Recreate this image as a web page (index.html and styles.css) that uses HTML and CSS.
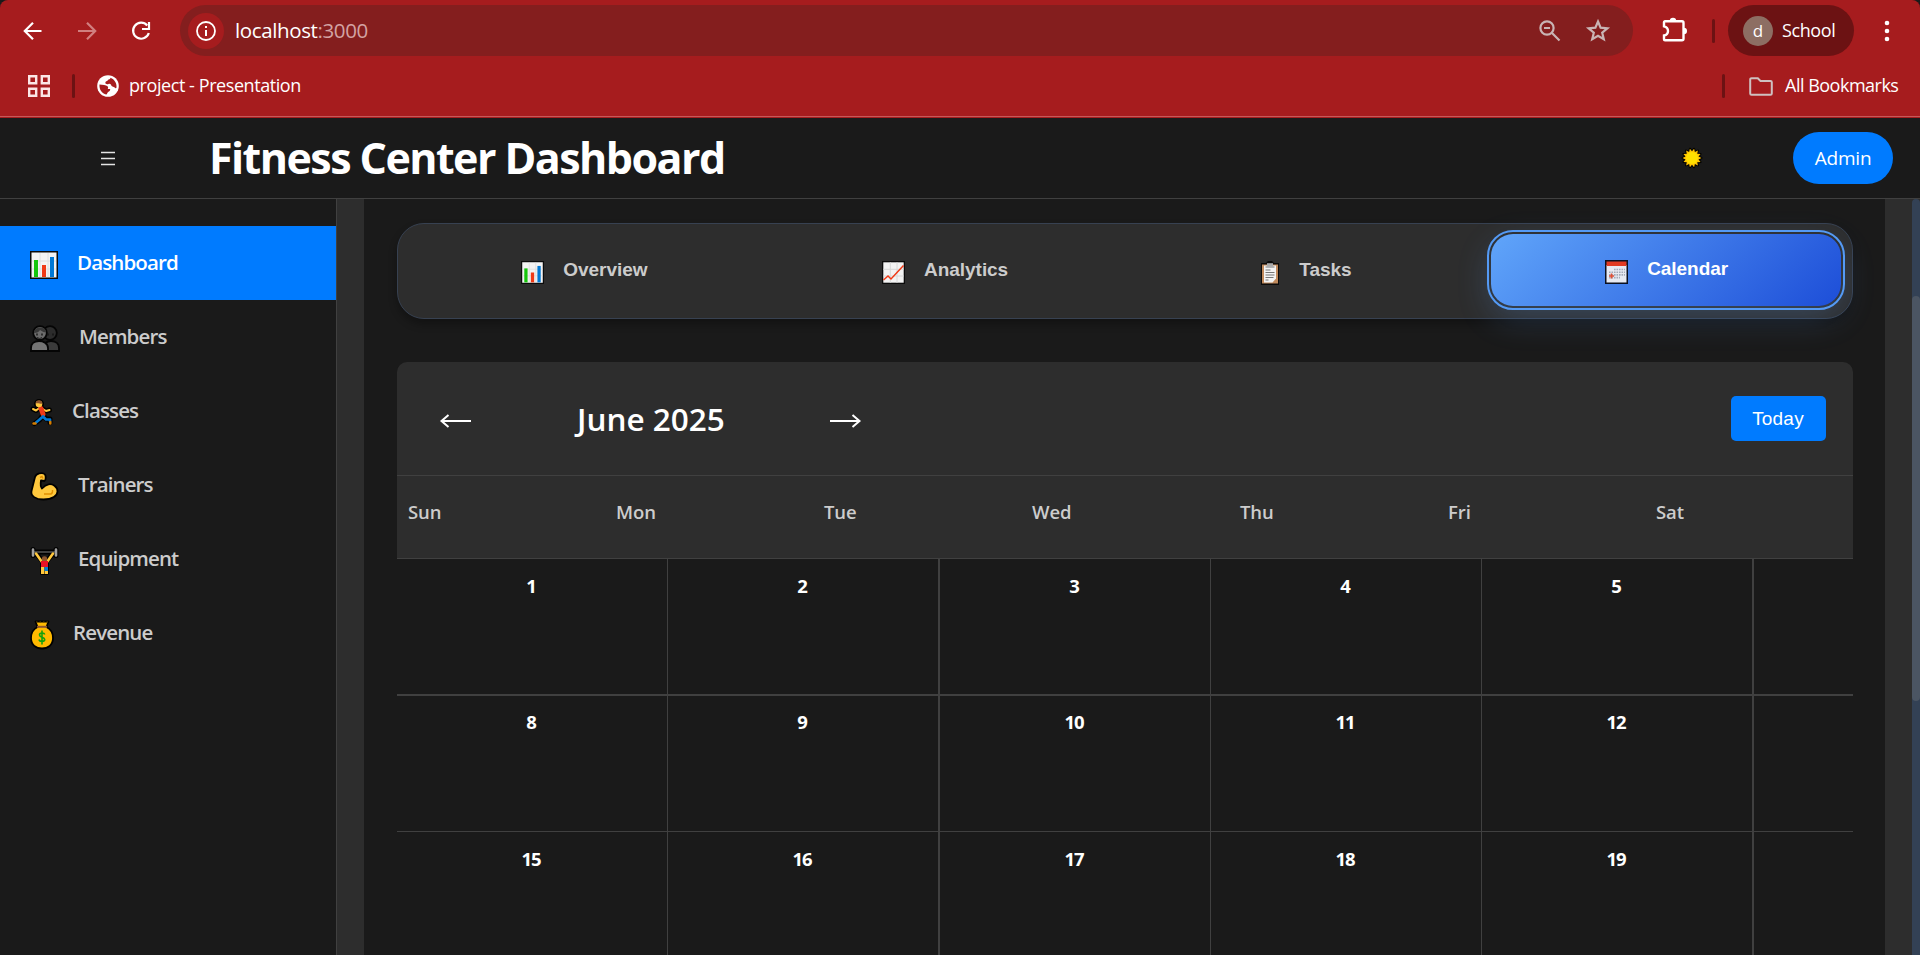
FILE: index.html
```html
<!DOCTYPE html>
<html lang="en">
<head>
<meta charset="utf-8">
<title>Fitness Center Dashboard</title>
<link rel="stylesheet" href="styles.css">
</head>
<body>
<svg class="defs" width="0" height="0" aria-hidden="true">
  <symbol id="bars" viewBox="0 0 28 28">
    <rect width="28" height="28" fill="#0b0b0b"/><rect x="1.500" y="1.500" width="25" height="25" fill="#f3f3f3"/>
    <path d="M10 2v24M18 2v24M2 10h24M2 18h24" stroke="#dedede" stroke-width="1"/>
    <rect x="4" y="9" width="4" height="17" fill="#16c60c"/><rect x="12" y="14" width="4" height="12" fill="#f03a17"/><rect x="20" y="6" width="4" height="20" fill="#0078d4"/>
  </symbol>
  <symbol id="trend" viewBox="0 0 23 23">
    <rect width="23" height="23" fill="#0b0b0b"/><rect x="1.3" y="1.3" width="20.4" height="20.4" fill="#f3f3f3"/>
    <path d="M8.3 1.3v20.4M15 1.3v20.4M1.3 8.3h20.4M1.3 15h20.4" stroke="#d8d8d8"/>
    <path d="M1.500 19L6 15l3 3L21.500 4.500" fill="none" stroke="#f03a17" stroke-width="1.500"/>
  </symbol>
</svg>

<div class="chrome">
  <div class="toolbar">
    <svg class="ic back" width="20" height="20" viewBox="0 0 20 20"><path d="M18.500 10H2.500M10 1.800L1.800 10l8.200 8.200" /></svg>
    <svg class="ic fwd" width="20" height="20" viewBox="0 0 20 20"><path d="M1 10h16.500M10 1.800l8.200 8.200-8.200 8.200" /></svg>
    <svg class="ic reload" width="20" height="20" viewBox="0 0 20 20"><path d="M16.200 4.500A8 8 0 1 0 17.800 12"/><path d="M18 1v7h-7"/></svg>
    <div class="omnibox">
      <span class="site"><svg width="20" height="20" viewBox="0 0 20 20"><circle cx="10" cy="10" r="9" fill="none" stroke="#fff" stroke-width="1.800"/><path d="M10 9v6M10 5v2" stroke="#fff" stroke-width="2"/></svg></span>
      <span class="url">localhost<span class="port">:3000</span></span>
      <svg class="zoomout" width="22" height="22" viewBox="0 0 22 22"><circle cx="8" cy="8" r="6.600"/><path d="M13 13l7.500 7.500M5 8h6"/></svg>
      <svg class="star" width="24" height="23" viewBox="0 0 24 23"><path d="M12 2.500l2.600 6.200 6.800.6-5.200 4.400 1.600 6.600L12 16.800l-5.800 3.500 1.600-6.600-5.200-4.400 6.800-.6z"/></svg>
    </div>
    <svg class="puzzle" width="26" height="25" viewBox="0 0 26 25"><path d="M2 9.300V5.200a1 1 0 0 1 1-1h17a1.500 1.500 0 0 1 1.500 1.500v16a1.500 1.500 0 0 1-1.500 1.500H3a1 1 0 0 1-1-1v-3.700c3-.7 4-2.500 4-4.600s-1-3.900-4-4.600z"/><path class="fill" d="M7.800 4a3.200 3.200 0 0 1 6.400 0zM21.800 10.800a3.200 3.200 0 0 1 0 6.400z"/></svg>
    <span class="sep"></span>
    <div class="profile"><span class="avatar">d</span><span class="pname">School</span></div>
    <svg class="dots" width="6" height="22" viewBox="0 0 6 22"><circle cx="3" cy="3" r="2.300"/><circle cx="3" cy="11" r="2.300"/><circle cx="3" cy="19" r="2.300"/></svg>
  </div>
  <div class="bookmarks">
    <svg class="apps" width="22" height="22" viewBox="0 0 22 22"><path d="M1.200 1.200h7v7h-7zM13.800 1.200h7v7h-7zM1.200 13.800h7v7h-7zM13.800 13.800h7v7h-7z"/></svg>
    <span class="sep"></span>
    <svg class="globe" width="22" height="22" viewBox="0 0 22 22"><circle cx="11" cy="11" r="10.800" fill="#fff"/><path d="M2.500 9.500c3 .3 6.500.3 8 1.800 1 1 .6 2.200.2 2.700h2.500c.3 2-1.700 2.500-2.500 3.500-.5.800-.7 1.600-1.500 2C5 18.800 2 14.500 2.500 9.500zM13.500 2.700c0 1.800-2 1.300-2.700 2.500C10 6.500 8.500 6 8.300 7.800c.2 1.500 2 1.700 3.200 1.200 1.500-.6 2.500.4 2.800 1.500.5 1.500 3 1 4 2.500.5.600 1 .2 1.200-.5C20 8.500 17.500 4.200 13.500 2.700z" fill="#a61c1e"/></svg>
    <span class="bm">project - Presentation</span>
    <span class="sep right"></span>
    <svg class="folder" width="24" height="19" viewBox="0 0 24 19"><path d="M2.500 1.200h6.300l2.700 2.800h10a1.300 1.300 0 0 1 1.300 1.300v11.200a1.300 1.300 0 0 1-1.300 1.300h-19a1.300 1.300 0 0 1-1.300-1.300v-14a1.300 1.300 0 0 1 1.300-1.300z"/></svg>
    <span class="all">All Bookmarks</span>
  </div>
</div>

<header class="header">
  <svg class="burger" width="14" height="15" viewBox="0 0 14 15"><path d="M0 1.500h14M0 7.500h14M0 13.500h14"/></svg>
  <h1>Fitness Center Dashboard</h1>
  <svg class="sun" width="22" height="22" viewBox="-11 -11 22 22"><path d="M9.500 0L6.500 1.480 8.560 4.120 5.200 4.150 5.920 7.430 2.880 6 2.110 9.260 0 6.700-2.110 9.260-2.880 6-5.920 7.430-5.200 4.150-8.560 4.120-6.500 1.480-9.500 0-6.500-1.480-8.560-4.120-5.200-4.150-5.920-7.430-2.880-6-2.110-9.260 0-6.700 2.110-9.260 2.880-6 5.920-7.430 5.200-4.150 8.560-4.120 6.500-1.480z" fill="#ffc400" stroke="#000" stroke-width="2" stroke-linejoin="round" paint-order="stroke"/><circle r="6" fill="#ffe000"/></svg>
  <button class="admin">Admin</button>
</header>

<div class="body">
  <nav class="sidebar">
    <a class="item active"><svg width="28" height="28"><use href="#bars"/></svg><span>Dashboard</span></a>
    <a class="item"><svg width="30" height="27" viewBox="0 0 30 27"><g stroke="#050505" stroke-width="1.800"><circle cx="20" cy="8" r="6.800" fill="#2c2c2c"/><path d="M14 26v-3c0-5 3-7 7-7s8 2 8 7v3z" fill="#3b3b3b"/><circle cx="10" cy="8" r="6.800" fill="#6c6c6c"/><path d="M1 26v-3c0-5 4-7 8-7s9 2 9 7v3z" fill="#747474"/></g><path d="M4 8c0-7 12-7 12-1-2 1-4-1-6-2-1 2-3 3-6 3z" fill="#383838"/><path d="M7 8.500v2M12 8.500v2M18 8.500v2M23 8.500v2" stroke="#111" stroke-width="1.300"/><path d="M7 12.500q3 2 5 0" fill="none" stroke="#222"/></svg><span>Members</span></a>
    <a class="item"><svg width="23" height="28" viewBox="0 0 23 28"><g fill="none" stroke-linecap="round" stroke-linejoin="round"><path d="M3 10l3 1.500 4-3 6 3.500 3.500-1M11 9l2 7-3.500 5-5 3.500M13 16l3 4h4v3.500" stroke="#000" stroke-width="5"/><circle cx="9" cy="5" r="5" fill="#000"/><path d="M3 10l3 1.500 4-3M12 9.500l4 2.500 3.500-1" stroke="#ffc83d" stroke-width="2"/><path d="M11 9.500l2 5.500" stroke="#f03a17" stroke-width="5"/><path d="M13 17.500l-4 3.500-3 2.500M13 17.500l3 3h4v1.500" stroke="#0078d4" stroke-width="2.700"/><path d="M3.500 24.500h2M20.300 23v1.500" stroke="#d67d00" stroke-width="2.500"/></g><circle cx="9" cy="5" r="3.300" fill="#ffc83d"/><path d="M5.700 4.500a3.300 3.300 0 0 1 6.600 0c-1 1-4-1-6.600 0z" fill="#8e562e"/></svg><span>Classes</span></a>
    <a class="item"><svg width="29" height="29" viewBox="0 0 29 29"><path d="M9 1.500C6 2 5 4 4.500 7L1.500 19c-1 5 4 8.500 12 8.500 9 0 14-4 14-8 0-5-5-8-9-7.200-3 .5-5 2.500-6.500 4.200-2-2-1.500-5-1-8l3.500.5c1.500-1 1.500-5 .5-6.500-1-1.200-4-1.500-6-1z" fill="#ffc83d" stroke="#000" stroke-width="1.800" stroke-linejoin="round"/><path d="M14 22h7q2-1 1.500-4M10 5.500l2-1 1 2" fill="none" stroke="#e08f00" stroke-width="1.400"/></svg><span>Trainers</span></a>
    <a class="item"><svg width="29" height="30" viewBox="0 0 29 30"><g fill="none" stroke-linejoin="round" stroke-linecap="round"><path d="M3 3.500v6M26 3.500v6M3 6h23M6 7.500l6.500 8v11h4V15.500l6.500-8" stroke="#000" stroke-width="5"/><path d="M12.500 16h4v10.500h-4z" stroke="#000" stroke-width="5"/><path d="M4 6h21" stroke="#555" stroke-width="1.500"/><path d="M3 3.500v6M26 3.500v6" stroke="#a0a0a0" stroke-width="2.600"/><path d="M6 7.500l6 8.500M23 7.500L17 16" stroke="#ffc83d" stroke-width="2.600"/></g><circle cx="14.500" cy="13" r="2.700" fill="#8e562e"/><path d="M11 15h7v6h-7z" fill="#e81224"/><path d="M11 21h3.500v7H11zM15 24h3v4h-3z" fill="#ffc83d"/><path d="M14.500 21H18v4h-3.500z" fill="#0078d4"/></svg><span>Equipment</span></a>
    <a class="item"><svg width="24" height="30" viewBox="0 0 24 30"><path d="M5.500 1.500h13l-2 5.500c4 2 6.500 6 6.500 11 0 7-5 10.500-11 10.500S1 25 1 18C1 13 3.500 9 7.500 7z" fill="#ffb900" stroke="#000" stroke-width="1.800" stroke-linejoin="round"/><path d="M7 6.800h10" stroke="#8e562e" stroke-width="2"/><path d="M6 2h12" stroke="#6b4b00" stroke-dasharray="1.500 2"/><path d="M14.700 14.500c-.5-2-5.200-2-5.200.5s5.200 2 5.200 4.500-5.200 2.500-5.700 0M12 10.500v14" fill="none" stroke="#13a10e" stroke-width="1.600"/></svg><span>Revenue</span></a>
  </nav>

  <div class="gutter">
    <main class="content">
      <div class="tabs">
        <a class="tab"><svg width="23" height="23"><use href="#bars"/></svg><span>Overview</span></a>
        <a class="tab"><svg width="23" height="23"><use href="#trend"/></svg><span>Analytics</span></a>
        <a class="tab"><svg width="20" height="24" viewBox="0 0 20 24"><path d="M1 2h5l2-2h4l2 2h5v22H1z" fill="#0b0b0b"/><path d="M2 3.500h16v19H2z" fill="#c18a5c"/><path d="M4 4.500h12v13l-3.500 4H4z" fill="#f4f4f4"/><path d="M7 2.200h6v3H7z" fill="#aaa"/><path d="M5.500 6h9M5.500 9h5M5.500 11.500h9M5.500 14h9M5.500 16.500h8M5.500 19h3" stroke="#777" stroke-width="1.100"/></svg><span>Tasks</span></a>
        <a class="tab on"><svg width="23" height="24" viewBox="0 0 23 24"><path d="M0 0h23v24H0z" fill="#0b1020"/><path d="M1.500 5h20v17.500h-20z" fill="#e8eaf2"/><path d="M1.500 1.500h20V6h-20z" fill="#e23a22"/><path d="M9 9.500h11M4 12.200h16M4 14.900h16M4 17.600h11" stroke="#a4aab8" stroke-width="1.600" stroke-dasharray="1.600 .9"/><path d="M6.500 13.500v5M4 16h5" stroke="#e05038" stroke-width="1.600"/></svg><span>Calendar</span></a>
      </div>

      <section class="calendar">
        <div class="cal-head">
          <svg class="arrow" width="31" height="14" viewBox="0 0 31 14"><path d="M1.500 7H31M8.500 1L1.500 7l7 6"/></svg>
          <h2>June 2025</h2>
          <svg class="arrow" width="31" height="14" viewBox="0 0 31 14"><path d="M0 7h29.500M22.500 1l7 6-7 6"/></svg>
          <button class="today">Today</button>
        </div>
        <div class="weekdays"><span>Sun</span><span>Mon</span><span>Tue</span><span>Wed</span><span>Thu</span><span>Fri</span><span>Sat</span></div>
        <div class="days thick"><span>1</span><span>2</span><span>3</span><span>4</span><span>5</span><span></span></div>
        <div class="days"><span>8</span><span>9</span><span>10</span><span>11</span><span>12</span><span></span></div>
        <div class="days last"><span>15</span><span>16</span><span>17</span><span>18</span><span>19</span><span></span></div>
      </section>
    </main>
    <div class="scroll"><div class="thumb"></div></div>
  </div>
</div>
</body>
</html>
```
FILE: styles.css
```css
* { box-sizing: border-box; }
html, body { margin: 0; height: 100%; overflow: hidden; }
body {
  display: flex; flex-direction: column;
  background: #1a1a1a; color: #fff;
  font-family: "Open Sans", "Noto Sans", sans-serif;
}
svg { display: block; flex: none; overflow: visible; }
svg.defs { position: absolute; }
button { border: 0; padding: 0; color: #fff; }
h1, h2 { margin: 0; white-space: nowrap; }
span { white-space: nowrap; }

/* browser frame */
.chrome { height: 118px; flex: none; background: #a61c1e; border-radius: 8px 8px 0 0; box-shadow: inset 0 -1px #a61c1e, inset 0 -2px #c5585a; }
.toolbar { display: flex; align-items: center; height: 61px; }
.ic { fill: none; stroke: #fff; stroke-width: 2.2; }
.back { margin-left: 23px; }
.fwd { margin-left: 34px; stroke: #d17f80; }
.reload { margin-left: 34px; }
.omnibox { display: flex; align-items: center; width: 1453px; height: 51px; margin-left: 29px; padding-left: 8px; border-radius: 26px; background: #841e1e; }
.site { display: grid; place-items: center; width: 36px; height: 36px; border-radius: 50%; background: #a61c1e; }
.url { margin: -2px 0 0 11px; font-size: 20.5px; letter-spacing: -.38px; }
.port { color: #d3a3a3; }
.zoomout { margin-left: auto; fill: none; stroke: #c9b4b4; stroke-width: 2.2; }
.star { margin: 0 23px 0 25px; fill: none; stroke: #c9b4b4; stroke-width: 2.2; }
.puzzle { margin: -3px 0 0 29px; fill: none; stroke: #fff; stroke-width: 2.4; }
.puzzle .fill { fill: #fff; stroke: none; }
.sep { flex: none; width: 3px; height: 24px; margin-left: 24px; border-radius: 2px; background: #6c1213; }
.profile { display: flex; align-items: center; width: 126px; height: 51px; margin-left: 13px; padding-left: 15px; border-radius: 26px; background: #6c1213; }
.avatar { display: grid; place-items: center; width: 30px; height: 30px; border-radius: 50%; background: #8d6e63; font-size: 17px; line-height: 30px; }
.pname { margin: -1px 0 0 9px; font-size: 18px; letter-spacing: -.4px; }
.dots { margin-left: 30px; fill: #fff; }

.bookmarks { display: flex; align-items: center; height: 50px; font-size: 18px; }
.apps { margin-left: 28px; fill: none; stroke: #fbe6e6; stroke-width: 2.4; }
.bookmarks .sep { margin-left: 22px; }
.globe { margin-left: 22px; }
.bm { margin: -2px 0 0 10px; letter-spacing: -.43px; }
.bookmarks .right { margin-left: auto; }
.folder { margin-left: 24px; fill: none; stroke: #cfc0c0; stroke-width: 2; }
.all { width: 135px; margin: -2px 0 0 12px; letter-spacing: -.5px; }

/* app header */
.header { display: flex; align-items: center; flex: none; height: 81px; border-bottom: 1px solid #404040; }
.burger { margin-left: 101px; fill: none; stroke: #e4e4e4; stroke-width: 1.7; }
h1 { margin-left: 94px; font-size: 43px; line-height: 60px; font-weight: 700; letter-spacing: -1.55px; }
.sun { margin-left: auto; }
.admin { width: 100px; height: 52px; margin: 0 27px 0 90px; border-radius: 27px; background: #007bff; font: 400 19px "Open Sans", sans-serif; letter-spacing: -.2px; }

/* sidebar */
.body { display: flex; flex: 1; min-height: 0; }
.sidebar { flex: none; width: 337px; padding-top: 27px; border-right: 1px solid #404040; }
.item { display: flex; align-items: center; gap: 19px; height: 74px; padding-left: 30px; color: #ccc; font-size: 20.5px; font-weight: 600; letter-spacing: -.88px; }
.item span { margin-top: -3px; }
.item svg { margin-top: 3px; }
.active { background: #007bff; color: #fff; }

/* content */
.gutter { display: flex; flex: 1; min-width: 0; padding-left: 27px; background: #2d2d2d; }
.content { width: 1521px; padding: 24px 32px 0 33px; background: #1a1a1a; overflow: hidden; }
.tabs { display: grid; grid-template-columns: repeat(4, 1fr); gap: 11px; align-items: center; height: 96px; padding: 0 11px; border: 1px solid #374151; border-radius: 27px; background: #2d2d2d; box-shadow: 0 5px 9px rgba(0, 0, 0, .3); }
.tab { display: flex; justify-content: center; align-items: center; gap: 19px; height: 72px; padding-left: 1px; border-radius: 22px; color: #ccc; font: 700 19px "Liberation Sans", sans-serif; letter-spacing: -.05px; }
.tab svg { margin-top: 3px; }
.tab span { margin-top: -2px; }
.on { margin-top: -2px; color: #fff; background: linear-gradient(135deg, #60a5fa, #1d4ed8); outline: 2px solid #549af5; outline-offset: 2px; box-shadow: 0 11px 34px rgba(96, 165, 250, .24); }

.calendar { height: 620px; margin-top: 43px; border-radius: 10px 10px 0 0; overflow: hidden; background: #1a1a1a; }
.cal-head { display: flex; align-items: center; height: 114px; padding: 0 27px 0 43px; border-bottom: 1px solid #404040; background: #2d2d2d; }
.arrow { fill: none; stroke: #fff; stroke-width: 2; margin-top: 4px; }
h2 { width: 253px; margin: 1px 0 0 106px; font-size: 31.5px; line-height: 42px; font-weight: 600; }
.today { width: 95px; height: 45px; margin-left: auto; padding-right: 1px; border-radius: 5px; background: #007bff; font: 400 19px "Liberation Sans", sans-serif; letter-spacing: .2px; }
.weekdays { display: grid; grid-template-columns: repeat(7, 208px); height: 83px; padding: 23px 0 0 11px; border-bottom: 1px solid #404040; background: #2d2d2d; color: #ccc; font-size: 18.5px; line-height: 25px; font-weight: 600; letter-spacing: -.1px; }
.days { display: grid; grid-template-columns: 271px 272px 271px 271px 272px 99px; height: 136px; border-bottom: 1px solid #404040; font-size: 18.5px; line-height: 26px; font-weight: 700; letter-spacing: -1px; text-align: center; }
.thick { height: 137px; border-bottom-width: 2px; }
.days span { padding: 14px 2px 0 0; border-right: 1px solid #404040; }
.days:not(.thick):not(.last) span { padding-top: 13px; }
.days span:nth-child(2), .days span:nth-child(5) { border-right-width: 2px; }
.days span:last-child { border: 0; }
.scroll { width: 8px; margin-left: 27px; padding-top: 97px; border-radius: 4px 4px 0 0; background: #334155; }
.thumb { height: 405px; border-radius: 4px; background: #4b5563; }
```
